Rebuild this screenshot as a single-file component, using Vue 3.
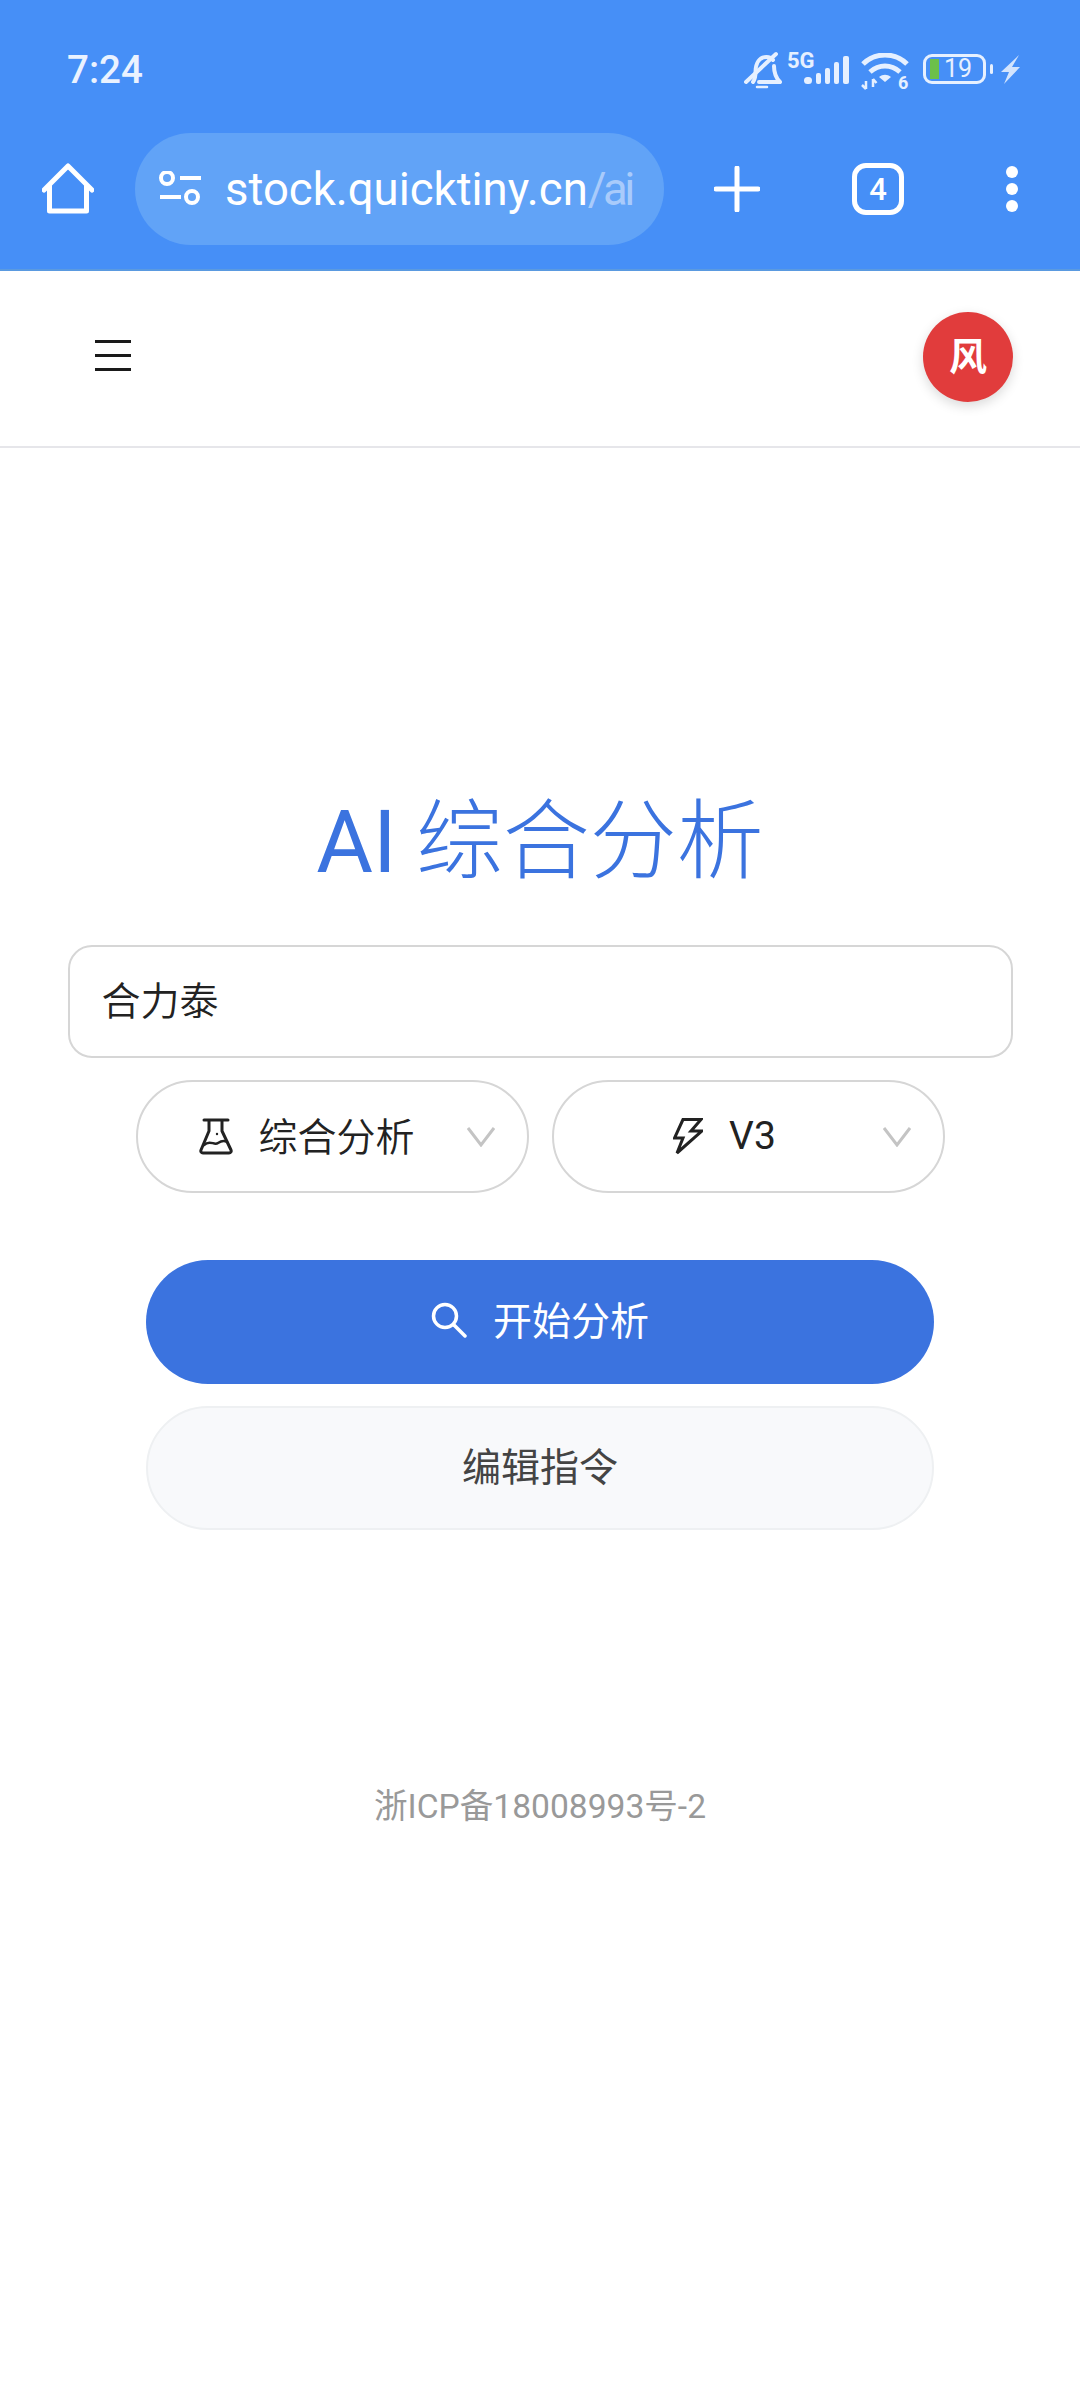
<script setup>
const query = "合力泰";
</script>

<template>
  <div class="page">
    <div class="chrome">
      <div class="status">
        <span class="time">7:24</span>
        <div class="status-icons">
          <svg width="38" height="40" viewBox="0 0 38 40" fill="none" stroke="#e6f0ff" stroke-width="4" stroke-linecap="round" stroke-linejoin="round">
            <path d="M9 32c1.500-2 2.500-5 2.500-10 0-9 4-15 11-15 3 0 5 1 6.500 3" />
            <path d="M30 16c0 7 2 12 6 16H15" />
            <path d="M2 32 32 4" />
            <path d="M13 37h10" stroke-width="2.500" />
          </svg>
          <div class="cell">
            <span class="five-g">5G</span>
            <svg width="45" height="28" viewBox="0 0 45 28" fill="#e6f0ff">
              <rect x="0" y="21" width="8" height="7" rx="3.500" />
              <rect x="12" y="17" width="5" height="11" rx="2" />
              <rect x="21" y="12" width="5" height="16" rx="2" />
              <rect x="30" y="6" width="5" height="22" rx="2" />
              <rect x="39" y="0" width="6" height="28" rx="2" />
            </svg>
          </div>
          <svg class="ic-wifi" width="50" height="42" viewBox="0 0 50 42" fill="none" stroke="#e6f0ff" stroke-width="5">
            <path d="M2 11C14-1 34-1 46 11" />
            <path d="M9 19c9-8 21-8 30 0" />
            <path d="M18 24c4-3 8-3 12 0l-6 5z" fill="#e6f0ff" stroke="none" />
            <path d="M5 28v8M1 32l4 4M12 26v8M12 26l3.500 4" stroke-width="2.500" />
            <text x="37" y="36" class="wifi-six">6</text>
          </svg>
          <div class="battery">
            <div class="batt-body">
              <span class="batt-fill"></span>
              <span class="batt-num">19</span>
            </div>
            <span class="batt-nub"></span>
          </div>
          <svg class="ic-charge" width="19" height="29" viewBox="0 0 19 29" fill="#d3e4fd">
            <path d="M18 0 0 17h8L3 29l16-17h-8z" />
          </svg>
        </div>
      </div>
      <div class="toolbar">
        <svg class="ic-home" width="52" height="52" viewBox="0 0 52 52" fill="none" stroke="#fff" stroke-width="5" stroke-linejoin="round" stroke-linecap="round">
          <path d="M2 27 26 3l24 24" />
          <path d="M7.500 23v25h37V23" />
        </svg>
        <div class="address">
          <svg width="44" height="36" viewBox="0 0 44 36" fill="none" stroke="#fff" stroke-width="4">
            <circle cx="9" cy="7" r="6" />
            <path d="M22 7h21M2 26h21" />
            <circle cx="34" cy="26" r="6" />
          </svg>
          <span class="url">stock.quicktiny.cn<span class="url-path">/ai</span></span>
        </div>
        <svg class="ic-plus" width="46" height="46" viewBox="0 0 46 46" stroke="#fff" stroke-width="5" stroke-linecap="round">
          <path d="M23 2v42M2 23h42" />
        </svg>
        <div class="tabs">4</div>
        <div class="dots"><i></i><i></i><i></i></div>
      </div>
    </div>

    <header class="top">
      <div class="burger"><i></i><i></i><i></i></div>
      <div class="avatar">风</div>
    </header>

    <main class="main">
      <h1 class="title"><span class="title-en">AI</span> 综合分析</h1>
      <div class="search-box">{{ query }}</div>
      <div class="selects">
        <div class="select">
          <svg width="34" height="37" viewBox="0 0 34 37" fill="none" stroke="#222" stroke-width="3" stroke-linejoin="round" stroke-linecap="round">
            <path d="M5 2h24M10 2v11L2 32c-.6 1.500.2 3 2 3h26c1.800 0 2.600-1.500 2-3L23 13V2" />
            <path d="M5 27c6-6 10 1 14-2 3-2 6-3 9-1" stroke-width="2.500" />
            <circle cx="18" cy="16" r="1.200" fill="#222" stroke="none" />
          </svg>
          <span class="sel-text">综合分析</span>
          <svg class="chev" width="28" height="20" viewBox="0 0 28 20" fill="none" stroke="#c4c4c4" stroke-width="3">
            <path d="M1 1l13 17L27 1" />
          </svg>
        </div>
        <div class="select select-model">
          <svg width="30" height="37" viewBox="0 0 30 37" fill="none" stroke="#222" stroke-width="3">
            <path d="M10 1.500 1.500 20H10L4 35 29 13H18l10-11.500z" />
          </svg>
          <span class="v3">V3</span>
          <svg class="chev" width="28" height="20" viewBox="0 0 28 20" fill="none" stroke="#c4c4c4" stroke-width="3">
            <path d="M1 1l13 17L27 1" />
          </svg>
        </div>
      </div>
      <button class="btn primary">
        <svg class="search-ic" width="36" height="36" viewBox="0 0 36 36" fill="none" stroke="#fff" stroke-width="3.500" stroke-linecap="round">
          <circle cx="14" cy="14" r="11.500" />
          <path d="M23 23l11 11" />
        </svg>
        <span class="btn-text">开始分析</span>
      </button>
      <button class="btn ghost"><span class="btn-text">编辑指令</span></button>
      <p class="icp">浙ICP备18008993号-2</p>
    </main>
  </div>
</template>

<style scoped>
.page {
  width: 1080px;
  min-height: 2400px;
  background: #fff;
  font-family: Roboto, "Noto Sans CJK SC", sans-serif;
  color: #222;
}
.chrome {
  background: #468ff7;
  height: 269px;
  border-bottom: 2px solid #5a9ae0;
  color: #fff;
}
.status {
  height: 133px;
  display: flex;
  justify-content: space-between;
  padding: 50px 60px 0 67px;
  box-sizing: border-box;
}
.time {
  font-size: 38.5px;
  font-weight: 500;
  line-height: 40px;
  color: #eaf2ff;
}
.status-icons {
  display: flex;
  align-items: flex-start;
  height: 40px;
}
.wifi-six {
  font-size: 18px;
  font-weight: 700;
  fill: #e6f0ff;
  stroke: none;
}
.ic-wifi {
  margin: 3px -2px 0 12px;
}
.cell {
  position: relative;
  margin: 6px 0 0 22px;
}
.five-g {
  position: absolute;
  left: -17px;
  top: -7px;
  font-size: 22px;
  font-weight: 700;
  line-height: 24px;
  color: #e6f0ff;
}
.battery {
  display: flex;
  align-items: center;
  margin: 4px 8px 0 14px;
}
.batt-body {
  width: 63px;
  height: 30px;
  box-sizing: border-box;
  border: 3px solid #e6f0ff;
  border-radius: 9px;
  display: flex;
  align-items: center;
  padding-left: 4px;
  gap: 5px;
}
.batt-fill {
  width: 9px;
  height: 20px;
  background: #6cc04a;
}
.batt-num {
  font-size: 25px;
  line-height: 24px;
  color: #e6f0ff;
}
.batt-nub {
  width: 3px;
  height: 10px;
  margin-left: 4px;
  background: #e6f0ff;
  border-radius: 2px;
}
.ic-charge {
  margin-top: 5px;
}
.toolbar {
  height: 112px;
  display: flex;
  align-items: center;
  padding-left: 42px;
}
.ic-home {
  margin-right: 41px;
}
.address {
  width: 529px;
  height: 112px;
  border-radius: 56px;
  background: #61a3f7;
  display: flex;
  align-items: center;
  box-sizing: border-box;
  padding-left: 23px;
  gap: 23px;
  overflow: hidden;
}
.url {
  font-size: 45.5px;
  color: #fff;
  white-space: nowrap;
}
.url-path {
  color: #a9cbfb;
  letter-spacing: -3.500px;
}
.ic-plus {
  margin-left: 50px;
}
.tabs {
  width: 52px;
  height: 52px;
  box-sizing: border-box;
  border: 5px solid #fff;
  border-radius: 14px;
  margin-left: 92px;
  display: flex;
  align-items: center;
  justify-content: center;
  font-size: 31px;
  font-weight: 500;
}
.dots {
  display: flex;
  flex-direction: column;
  gap: 5px;
  margin-left: 102px;
}
.dots i {
  width: 12px;
  height: 12px;
  border-radius: 50%;
  background: #fff;
}
.top {
  height: 177px;
  box-sizing: border-box;
  border-bottom: 2px solid #e6e6ea;
  display: flex;
  justify-content: space-between;
  align-items: center;
  padding: 0 67px 3px 95px;
}
.burger {
  display: flex;
  flex-direction: column;
  gap: 11px;
  width: 36px;
  margin-bottom: 3px;
}
.burger i {
  height: 3px;
  background: #1a1a1a;
}
.avatar {
  width: 90px;
  height: 90px;
  box-sizing: border-box;
  padding-bottom: 7px;
  border-radius: 50%;
  background: #e13c3c;
  color: #fff;
  font-size: 38px;
  font-weight: 700;
  display: flex;
  align-items: center;
  justify-content: center;
  box-shadow: 0 4px 12px rgba(0, 0, 0, 0.15);
}
.main {
  display: flex;
  flex-direction: column;
  align-items: center;
  padding-top: 334px;
}
.title {
  margin: 0;
  font-size: 87px;
  line-height: 120px;
  font-weight: 300;
  color: #3b73df;
}
.title-en {
  font-weight: 400;
  margin-right: -2px;
}
.search-box {
  margin-top: 43px;
  width: 945px;
  height: 113px;
  box-sizing: border-box;
  border: 2px solid #d6d6d6;
  border-radius: 24px;
  padding: 0 0 7px 32px;
  display: flex;
  align-items: center;
  font-size: 39px;
  font-weight: 350;
}
.selects {
  margin-top: 22px;
  display: flex;
  gap: 23px;
}
.select {
  position: relative;
  width: 393px;
  height: 113px;
  box-sizing: border-box;
  border: 2px solid #d6d6d6;
  border-radius: 57px;
  display: flex;
  align-items: center;
  justify-content: center;
  gap: 25px;
  font-size: 39px;
  padding-right: 50px;
}
.select-model {
  gap: 26px;
  padding-right: 47px;
}
.sel-text {
  font-weight: 350;
  margin-bottom: 6px;
}
.v3 {
  margin-bottom: 2px;
}
.chev {
  position: absolute;
  right: 32px;
  top: 45px;
}
.btn {
  width: 788px;
  font-family: inherit;
  font-size: 39px;
  border-radius: 62px;
  display: flex;
  align-items: center;
  justify-content: center;
  box-sizing: border-box;
  padding: 0;
}
.btn-text {
  margin-bottom: 8px;
}
.search-ic {
  margin-bottom: 4px;
}
.primary {
  margin-top: 67px;
  height: 124px;
  background: #3b73df;
  color: #fff;
  border: none;
  gap: 26px;
}
.ghost {
  margin-top: 22px;
  height: 124px;
  background: #f8f9fb;
  color: #444;
  border: 2px solid #eef0f2;
}
.icp {
  margin: 254px 0 0;
  font-size: 33.6px;
  line-height: 46px;
  color: #999;
}
</style>
